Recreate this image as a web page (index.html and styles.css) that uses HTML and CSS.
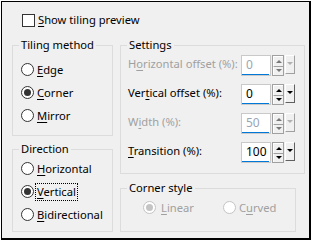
FILE: index.html
```html
<!DOCTYPE html>
<html>
<head>
<meta charset="utf-8">
<link rel="stylesheet" href="styles.css">
</head>
<body>
<div class="outer">
  <div class="frame">
    <div class="toprow">
      <span class="check"></span>
      <span class="lbl"><u>S</u>how tiling preview</span>
    </div>
    <div class="cols">
      <div class="col">
        <div class="group g-tiling">
          <div class="gtitle">Tiling method</div>
          <div class="rlist r-tiling">
            <div class="rrow"><span class="radio"></span><span class="lbl"><u>E</u>dge</span></div>
            <div class="rrow"><span class="radio on"></span><span class="lbl"><u>C</u>orner</span></div>
            <div class="rrow"><span class="radio"></span><span class="lbl"><u>M</u>irror</span></div>
          </div>
        </div>
        <div class="group g-dir">
          <div class="gtitle">Direction</div>
          <div class="rlist r-dir">
            <div class="rrow"><span class="radio"></span><span class="lbl"><u>H</u>orizontal</span></div>
            <div class="rrow"><span class="radio on"></span><span class="lbl focus"><u>V</u>ertical</span></div>
            <div class="rrow"><span class="radio"></span><span class="lbl"><u>B</u>idirectional</span></div>
          </div>
        </div>
      </div>
      <div class="col">
        <div class="group g-settings">
          <div class="gtitle">Settings</div>
          <div class="slist">
            <div class="srow dis">
              <span class="slbl">H<u>o</u>rizontal offset (%):</span>
              <div class="spin">
                <div class="field"><span class="val">0</span><span class="bar"></span></div>
                <div class="updown"><span class="btn"><i class="up"></i></span><span class="btn"><i class="dn"></i></span></div>
                <div class="drop"><i class="dn"></i></div>
              </div>
            </div>
            <div class="srow">
              <span class="slbl">Ver<u>t</u>ical offset (%):</span>
              <div class="spin">
                <div class="field"><span class="val">0</span><span class="bar"></span></div>
                <div class="updown"><span class="btn"><i class="up"></i></span><span class="btn"><i class="dn"></i></span></div>
                <div class="drop"><i class="dn"></i></div>
              </div>
            </div>
            <div class="srow dis">
              <span class="slbl">W<u>i</u>dth (%):</span>
              <div class="spin">
                <div class="field"><span class="val">50</span><span class="bar"></span></div>
                <div class="updown"><span class="btn"><i class="up"></i></span><span class="btn"><i class="dn"></i></span></div>
                <div class="drop"><i class="dn"></i></div>
              </div>
            </div>
            <div class="srow">
              <span class="slbl"><u>T</u>ransition (%):</span>
              <div class="spin">
                <div class="field"><span class="val">100</span><span class="bar"></span></div>
                <div class="updown"><span class="btn"><i class="up"></i></span><span class="btn"><i class="dn"></i></span></div>
                <div class="drop"><i class="dn"></i></div>
              </div>
            </div>
          </div>
        </div>
        <div class="group g-corner">
          <div class="gtitle">Corner style</div>
          <div class="crow">
            <div class="rrow c-lin"><span class="radio on dis"></span><span class="lbl dis"><u>L</u>inear</span></div>
            <div class="rrow c-cur"><span class="radio dis"></span><span class="lbl dis">C<u>u</u>rved</span></div>
          </div>
        </div>
      </div>
    </div>
  </div>
</div>
</body>
</html>
```
FILE: styles.css
```css
* { box-sizing: border-box; }
html, body { margin: 0; padding: 0; background: #fff; }
body {
  width: 311px; height: 240px; overflow: hidden;
  font-family: "Noto Sans", "Open Sans", sans-serif;
  font-size: 11.2px; color: #000;
}
u { text-decoration-thickness: 1px; text-underline-offset: 2px; }
.outer { padding: 1px 0 0 1px; width: 311px; height: 240px; }
.frame {
  width: 310px; height: 239px;
  border-left: 1px solid #000; border-top: 1px solid #000;
  border-right: 2px solid #000; border-bottom: 2px solid #000;
  background: #f0f0f0;
  padding: 10px 0 0 10px;
}
.toprow { display: flex; align-items: center; height: 16px; padding-left: 10px; }
.check { width: 13px; height: 13px; border: 1px solid #333; background: #fff; }
.toprow .lbl { margin-left: 3px; line-height: 16px; }

.cols { display: flex; gap: 7px; margin-top: 17px; }
.col { display: flex; flex-direction: column; }
.group { border: 1px solid #dcdcdc; }
.gtitle {
  width: fit-content; margin: -9px 0 0 6px; padding: 0 2px;
  background: #f0f0f0; line-height: 16px;
}
.g-tiling { width: 101px; height: 91px; }
.g-dir { width: 101px; height: 83px; margin-top: 13px; }
.g-settings { width: 185px; height: 129px; }
.g-corner { width: 176px; height: 44px; margin-top: 14px; }

.rlist { padding-left: 8px; }
.r-tiling { margin-top: 5px; }
.r-dir { margin-top: 0; }
.rrow { display: flex; align-items: center; height: 23px; }
.rrow .lbl { margin-left: 3px; line-height: 16px; }
.radio {
  width: 13px; height: 13px; border-radius: 50%;
  border: 1px solid #333; background: #fff;
  display: flex; align-items: center; justify-content: center;
  flex: none;
}
.radio.on::after {
  content: ""; width: 7px; height: 7px; border-radius: 50%; background: #333;
}
.radio.dis { border-color: #c4c4c4; }
.radio.on.dis::after { background: #c4c4c4; }
.lbl.dis { color: #a0a0a0; }
.focus { outline: 1px dotted #000; outline-offset: 0; padding: 0 1px; margin-left: 2px !important; }

.slist { margin-top: 2px; }
.srow { display: flex; align-items: flex-start; height: 29px; padding-left: 7px; }
.slbl { width: 113px; line-height: 18px; white-space: nowrap; }
.srow.dis .slbl { color: #a0a0a0; }
.spin { display: flex; align-items: flex-start; height: 21px; }
.field {
  width: 30px; height: 21px; background: #fff;
  border: 1px solid #c9c9c9;
  display: flex; flex-direction: column; padding-left: 4px;
}
.val { flex: 1; line-height: 18px; font-size: 12px; }
.srow.dis .val { color: #9aa6b4; }
.bar { width: 27px; height: 2px; background: #0078d7; margin-left: -4px; }
.updown {
  margin-left: 1px; width: 12px; height: 21px; display: flex; flex-direction: column;
  border: 1px solid #a0a0a0; background: #f0f0f0;
}
.btn {
  flex: 1; display: flex; align-items: center; justify-content: center;
  border-top: 1px solid #fff; border-left: 1px solid #fff;
}
.btn + .btn { border-top: 1px solid #a0a0a0; }
.drop {
  margin-left: 1px; width: 10px; height: 19px;
  border-top: 1px solid #fff; border-left: 1px solid #fff;
  border-right: 1px solid #606060; border-bottom: 1px solid #606060;
  background: #f0f0f0;
  display: flex; justify-content: center; padding-top: 6px;
}
i { display: block; width: 0; height: 0; }
.up { border-left: 3px solid transparent; border-right: 3px solid transparent; border-bottom: 3px solid #000; }
.dn { border-left: 3px solid transparent; border-right: 3px solid transparent; border-top: 3px solid #000; }
.srow.dis .up { border-bottom-color: #777; }
.srow.dis .dn { border-top-color: #777; }
.srow.dis .drop .dn { border-top-color: #b0b0b0; }
.srow.dis .drop { border-right-color: #a0a0a0; border-bottom-color: #a0a0a0; }

.crow { display: flex; margin-top: 3px; }
.crow .rrow { height: 17px; }
.c-lin { margin-left: 22px; }
.c-cur { margin-left: 29px; }
.c-lin .lbl { margin-left: 5px; }
```
